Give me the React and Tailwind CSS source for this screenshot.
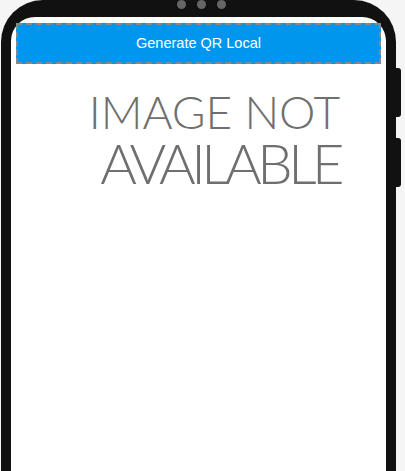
import React from 'react';

const App = () => {
  return (
    <div className="w-[405px] h-[471px] overflow-hidden bg-[#f5f5f5]">
      <div className="relative ml-[1px] w-[395px] h-[540px] rounded-t-[42px] bg-[#111111] pt-[17px] px-[10px]">
        {/* camera dots */}
        <div className="absolute top-0 left-[176px] flex gap-[11px]">
          <span className="block w-[9px] h-[9px] rounded-full bg-[#666666]" />
          <span className="block w-[9px] h-[9px] rounded-full bg-[#666666]" />
          <span className="block w-[9px] h-[9px] rounded-full bg-[#666666]" />
        </div>

        {/* side buttons */}
        <div className="absolute right-[-5px] top-[68px] w-[5px] h-[49px] rounded-r-[3px] bg-[#111111]" />
        <div className="absolute right-[-5px] top-[138px] w-[5px] h-[49px] rounded-r-[3px] bg-[#111111]" />

        <div className="h-full bg-white rounded-t-[24px] pt-[6px] px-[5px]">
          <button className="w-full h-[41px] bg-[#0096ee] border-2 border-dashed border-[#888888] text-white text-[14.5px] font-['Liberation_Sans',Arial,sans-serif]">
            Generate QR Local
          </button>

          <div className="flex flex-col items-end pr-[41px] pt-[25px] text-[#6f6f6f] font-['Lato','Open_Sans',sans-serif] font-light leading-none">
            <div className="text-[46px] tracking-[-0.1px]">IMAGE NOT</div>
            <div className="text-[56px] tracking-[-4.5px]">AVAILABLE</div>
          </div>
        </div>
      </div>
    </div>
  );
};

export default App;
